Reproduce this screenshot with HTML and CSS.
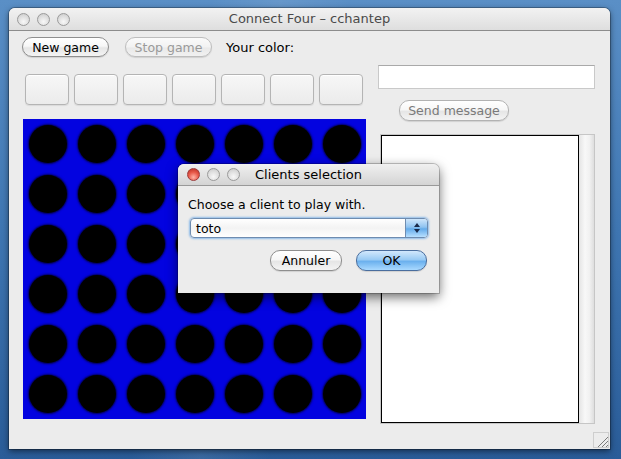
FILE: index.html
```html
<!DOCTYPE html>
<html>
<head>
<meta charset="utf-8">
<link rel="stylesheet" href="styles.css">
</head>
<body>
<div class="desktop">
  <div class="window">
    <div class="titlebar">
      <div class="lights">
        <span class="light"></span><span class="light"></span><span class="light"></span>
      </div>
      <div class="title">Connect Four – cchantep</div>
    </div>
    <div class="main">
      <div class="left">
        <div class="toolbar">
          <button class="aqua btn-game">New game</button>
          <button class="aqua btn-game disabled">Stop game</button>
          <span class="label">Your color:</span>
        </div>
        <div class="drops">
          <div class="drop"></div><div class="drop"></div><div class="drop"></div><div class="drop"></div><div class="drop"></div><div class="drop"></div><div class="drop"></div>
        </div>
        <div class="board">
          <div class="cell"><span class="hole"></span></div><div class="cell"><span class="hole"></span></div><div class="cell"><span class="hole"></span></div><div class="cell"><span class="hole"></span></div><div class="cell"><span class="hole"></span></div><div class="cell"><span class="hole"></span></div><div class="cell"><span class="hole"></span></div>
          <div class="cell"><span class="hole"></span></div><div class="cell"><span class="hole"></span></div><div class="cell"><span class="hole"></span></div><div class="cell"><span class="hole"></span></div><div class="cell"><span class="hole"></span></div><div class="cell"><span class="hole"></span></div><div class="cell"><span class="hole"></span></div>
          <div class="cell"><span class="hole"></span></div><div class="cell"><span class="hole"></span></div><div class="cell"><span class="hole"></span></div><div class="cell"><span class="hole"></span></div><div class="cell"><span class="hole"></span></div><div class="cell"><span class="hole"></span></div><div class="cell"><span class="hole"></span></div>
          <div class="cell"><span class="hole"></span></div><div class="cell"><span class="hole"></span></div><div class="cell"><span class="hole"></span></div><div class="cell"><span class="hole"></span></div><div class="cell"><span class="hole"></span></div><div class="cell"><span class="hole"></span></div><div class="cell"><span class="hole"></span></div>
          <div class="cell"><span class="hole"></span></div><div class="cell"><span class="hole"></span></div><div class="cell"><span class="hole"></span></div><div class="cell"><span class="hole"></span></div><div class="cell"><span class="hole"></span></div><div class="cell"><span class="hole"></span></div><div class="cell"><span class="hole"></span></div>
          <div class="cell"><span class="hole"></span></div><div class="cell"><span class="hole"></span></div><div class="cell"><span class="hole"></span></div><div class="cell"><span class="hole"></span></div><div class="cell"><span class="hole"></span></div><div class="cell"><span class="hole"></span></div><div class="cell"><span class="hole"></span></div>
        </div>
      </div>
      <div class="right">
        <div class="field"></div>
        <button class="aqua btn-send">Send message</button>
        <div class="scroll">
          <div class="textarea"></div>
          <div class="track"></div>
        </div>
      </div>
    </div>
    <div class="footer">
      <svg class="grip" width="16" height="16" viewBox="0 0 16 16">
        <rect x="0.5" y="0.5" width="15" height="15" fill="none" stroke="#b0b0b0" stroke-dasharray="1 1"/>
        <line x1="15" y1="5" x2="5" y2="15" stroke="#7a7a7a"/>
        <line x1="15" y1="9" x2="9" y2="15" stroke="#7a7a7a"/>
        <line x1="15" y1="13" x2="13" y2="15" stroke="#7a7a7a"/>
      </svg>
    </div>
  </div>

  <div class="dialog">
    <div class="dlg-titlebar">
      <div class="lights">
        <span class="light red"></span><span class="light"></span><span class="light"></span>
      </div>
      <div class="dlg-title">Clients selection</div>
    </div>
    <div class="dlg-body">
      <div class="prompt">Choose a client to play with.</div>
      <div class="combo">
        <span class="combo-text">toto</span>
        <span class="combo-arrows">
          <svg width="8" height="12" viewBox="0 0 8 12">
            <path d="M4 1 L7 5 L1 5 Z" fill="#1a2a4a"/>
            <path d="M4 11 L7 7 L1 7 Z" fill="#1a2a4a"/>
          </svg>
        </span>
      </div>
      <div class="dlg-buttons">
        <button class="aqua btn-cancel">Annuler</button>
        <button class="aqua default btn-ok">OK</button>
      </div>
    </div>
  </div>
</div>
</body>
</html>
```

FILE: styles.css
```css
html, body {
  margin: 0;
  padding: 0;
}

body {
  width: 621px;
  height: 459px;
  overflow: hidden;
  font-family: "DejaVu Sans", "Liberation Sans", sans-serif;
  font-size: 12px;
  color: #000;
}

.desktop {
  position: relative;
  width: 621px;
  height: 459px;
  background:
    linear-gradient(100deg, rgba(255,255,255,0) 30%, rgba(255,255,255,0.08) 40%, rgba(255,255,255,0) 50%),
    linear-gradient(180deg, #5a8fc6 0%, #3f76b2 50%, #2a5c98 100%);
  padding: 8px 0 0 9px;
  box-sizing: border-box;
}

.window {
  width: 601px;
  height: 441px;
  background: #ececec;
  border-radius: 6px 6px 0 0;
  box-shadow: 0 2px 6px rgba(0,0,0,0.55), 0 0 0 1px rgba(0,0,0,0.25);
  display: flex;
  flex-direction: column;
  overflow: hidden;
}

.titlebar {
  height: 22px;
  border-bottom: 1px solid #8c8c8c;
  background: linear-gradient(#f2f2f2, #dedede);
  display: flex;
  align-items: center;
  position: relative;
  flex: none;
}

.lights {
  display: flex;
  gap: 7px;
  padding-left: 8px;
}

.light {
  width: 13px;
  height: 13px;
  border-radius: 50%;
  box-sizing: border-box;
  border: 1px solid #9a9a9a;
  background: radial-gradient(circle at 50% 70%, #f8f8f8 0%, #dcdcdc 60%, #c4c4c4 100%);
}

.light.red {
  border-color: #9c3a3a;
  background: radial-gradient(circle at 50% 75%, #ffb3a6 0%, #e85a4a 50%, #b52a20 100%);
}

.title {
  position: absolute;
  left: 0;
  right: 0;
  top: 0;
  line-height: 22px;
  text-align: center;
  font-size: 13px;
  color: #4a4a4a;
  pointer-events: none;
}

.main {
  flex: 1;
  display: flex;
  gap: 12px;
  padding-left: 13px;
}

.left {
  width: 344px;
  display: flex;
  flex-direction: column;
}

.toolbar {
  margin-top: 6px;
  display: flex;
  align-items: center;
  height: 20px;
}

.aqua {
  font-family: "DejaVu Sans", "Liberation Sans", sans-serif;
  font-size: 12.5px;
  height: 20px;
  padding: 0;
  border-radius: 10px;
  border: 1px solid #8e8e8e;
  background: linear-gradient(#ffffff 0%, #f7f7f7 45%, #e6e6e6 55%, #f4f4f4 100%);
  color: #000;
  box-shadow: 0 1px 1px rgba(0,0,0,0.12);
  box-sizing: border-box;
}

.aqua.disabled {
  color: #9a9a9a;
  border-color: #bdbdbd;
  background: linear-gradient(#fafafa 0%, #f2f2f2 50%, #e9e9e9 55%, #f1f1f1 100%);
}

.btn-game {
  width: 87px;
  margin-right: 16px;
}

.btn-game.disabled {
  margin-right: 14px;
}

.label {
  font-size: 13px;
}

.drops {
  margin-top: 17px;
  margin-left: 3px;
  display: flex;
  gap: 5px;
}

.drop {
  width: 44px;
  height: 31px;
  box-sizing: border-box;
  border: 1px solid #b4b4b4;
  border-radius: 4px;
  background: linear-gradient(#f7f7f7, #ebebeb);
  box-shadow: inset 0 1px 0 #fff, 0 1px 1px rgba(0,0,0,0.08);
}

.board {
  margin-top: 14px;
  margin-left: 1px;
  width: 343px;
  height: 300px;
  background: #0303e0;
  display: grid;
  grid-template-columns: repeat(7, 49px);
  grid-template-rows: repeat(6, 50px);
}

.cell {
  display: flex;
  align-items: center;
  justify-content: center;
}

.hole {
  width: 38px;
  height: 38px;
  border-radius: 50%;
  background: #000;
  box-shadow: 0 0 2px 1px rgba(0,0,20,0.7);
}

.right {
  width: 217px;
  display: flex;
  flex-direction: column;
  align-items: flex-start;
}

.field {
  margin-top: 34px;
  width: 217px;
  height: 24px;
  box-sizing: border-box;
  background: #fff;
  border: 1px solid #c9c9c9;
  border-top-color: #a9a9a9;
}

.btn-send {
  margin-top: 11px;
  margin-left: 21px;
  width: 110px;
  height: 21px;
  color: #7a7a7a;
  border-color: #b2b2b2;
}

.scroll {
  margin-top: 13px;
  margin-left: 2px;
  width: 215px;
  height: 290px;
  box-sizing: border-box;
  border: 1px solid #c6c6c6;
  display: flex;
}

.textarea {
  width: 198px;
  height: 288px;
  box-sizing: border-box;
  background: #fff;
  border: 1px solid #000;
}

.track {
  flex: 1;
  background: linear-gradient(90deg, #e4e4e4, #f8f8f8 40%, #f1f1f1 70%, #dedede);
}

.footer {
  height: 17px;
  display: flex;
  justify-content: flex-end;
  align-items: flex-start;
  padding-right: 1px;
  flex: none;
}

.grip {
  display: block;
}

/* dialog sheet floating above the window */
.dialog {
  position: absolute;
  left: 178px;
  top: 164px;
  width: 261px;
  height: 129px;
  background: #ececec;
  border-radius: 6px 6px 0 0;
  box-shadow: 0 4px 12px rgba(0,0,0,0.6), 0 0 0 1px rgba(0,0,0,0.2);
  display: flex;
  flex-direction: column;
  overflow: hidden;
}

.dlg-titlebar {
  height: 21px;
  border-bottom: 1px solid #999;
  background: linear-gradient(#f0f0f0, #d4d4d4);
  display: flex;
  align-items: center;
  position: relative;
}

.dlg-titlebar .lights {
  padding-left: 9px;
}

.dlg-title {
  position: absolute;
  left: 0;
  right: 0;
  top: 0;
  line-height: 22px;
  text-align: center;
  font-size: 13px;
  color: #000;
}

.dlg-body {
  padding: 0 11px 0 10px;
  display: flex;
  flex-direction: column;
}

.prompt {
  margin-top: 11px;
  font-size: 12.5px;
  line-height: 15px;
}

.combo {
  margin-top: 6px;
  margin-left: 2px;
  height: 20px;
  width: 238px;
  box-sizing: border-box;
  border: 1px solid #6e8cb0;
  border-radius: 4px;
  background: linear-gradient(#ffffff, #f3f3f3 50%, #ffffff);
  box-shadow: 0 0 2px 1px #8fbbe8;
  display: flex;
  align-items: center;
  overflow: hidden;
}

.combo-text {
  flex: 1;
  padding-left: 5px;
  font-size: 12.5px;
}

.combo-arrows {
  width: 21px;
  height: 18px;
  border-left: 1px solid #6e8cb0;
  background: linear-gradient(#cfe6fb 0%, #8fc3f1 45%, #64abea 55%, #b8e0ff 100%);
  display: flex;
  align-items: center;
  justify-content: center;
}

.dlg-buttons {
  margin-top: 12px;
  display: flex;
  justify-content: flex-end;
  gap: 14px;
  padding-right: 1px;
}

.btn-cancel {
  width: 72px;
  height: 21px;
}

.btn-ok {
  width: 71px;
  height: 21px;
}

.aqua.default {
  border-color: #4a6e9e;
  background: linear-gradient(#d2e8fc 0%, #9acbf4 45%, #6cb1ee 55%, #a9d9ff 100%);
}
```
